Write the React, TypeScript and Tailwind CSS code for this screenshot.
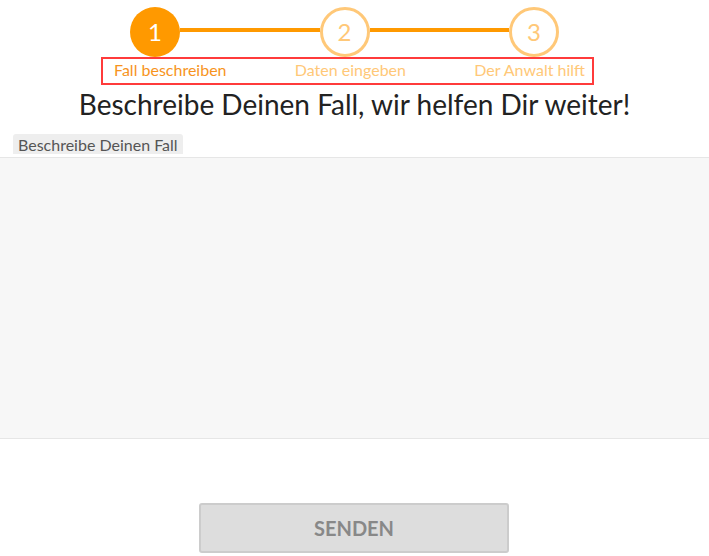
import React from "react";

const steps = [
  { n: 1, label: "Fall beschreiben", active: true },
  { n: 2, label: "Daten eingeben", active: false },
  { n: 3, label: "Der Anwalt hilft", active: false },
];

const Circle = ({ n, active }: { n: number; active: boolean }) => (
  <div
    className={
      active
        ? "w-[50px] h-[50px] shrink-0 rounded-full bg-[#ff9900] flex items-center justify-center text-white text-[24px]"
        : "w-[50px] h-[50px] shrink-0 rounded-full border-[3px] border-[#ffc878] bg-white flex items-center justify-center text-[#ffc878] text-[24px]"
    }
  >
    {n}
  </div>
);

export default function App() {
  return (
    <div className="w-full min-h-[556px] bg-white font-['Lato','Liberation_Sans',sans-serif]">
      {/* Stepper */}
      <div className="pt-[7px] pl-[130px]">
        <div className="flex items-center w-[429px]">
          <Circle n={1} active />
          <div className="flex-1 h-[4px] bg-[#ff9900] -mt-[5px]" />
          <Circle n={2} active={false} />
          <div className="flex-1 h-[4px] bg-[#ff9900] -mt-[5px]" />
          <Circle n={3} active={false} />
        </div>
      </div>

      <div className="ml-[101px] w-[493px] h-[28px] border-2 border-[#ff3b3b] flex items-center justify-between pl-[11px] pr-[7px] pb-[3px]">
        {steps.map((s) => (
          <span
            key={s.n}
            className={
              s.active
                ? "text-[16px] text-[#f7941d] leading-none"
                : "text-[16px] text-[#ffc878] leading-none"
            }
          >
            {s.label}
          </span>
        ))}
      </div>

      <h1 className="text-center text-[28px] text-[#222] leading-[40px] -mt-[1px]">
        Beschreibe Deinen Fall, wir helfen Dir weiter!
      </h1>

      {/* Textarea with tab label */}
      <div className="mt-[9px]">
        <div className="ml-[13px] inline-block bg-[#eeeeee] rounded-t-[3px] px-[5px] h-[20px] leading-[22px] text-[16px] text-[#555]">
          Beschreibe Deinen Fall
        </div>
        <div className="h-[282px] bg-[#f7f7f7] border-y border-[#e6e6e6]" />
      </div>

      <div className="flex justify-center pt-[64px]">
        <button className="ml-[-1px] w-[310px] h-[50px] bg-[#dddddd] border-2 border-[#cccccc] rounded-[3px] text-[20px] font-bold text-[#888888]">
          SENDEN
        </button>
      </div>
    </div>
  );
}
